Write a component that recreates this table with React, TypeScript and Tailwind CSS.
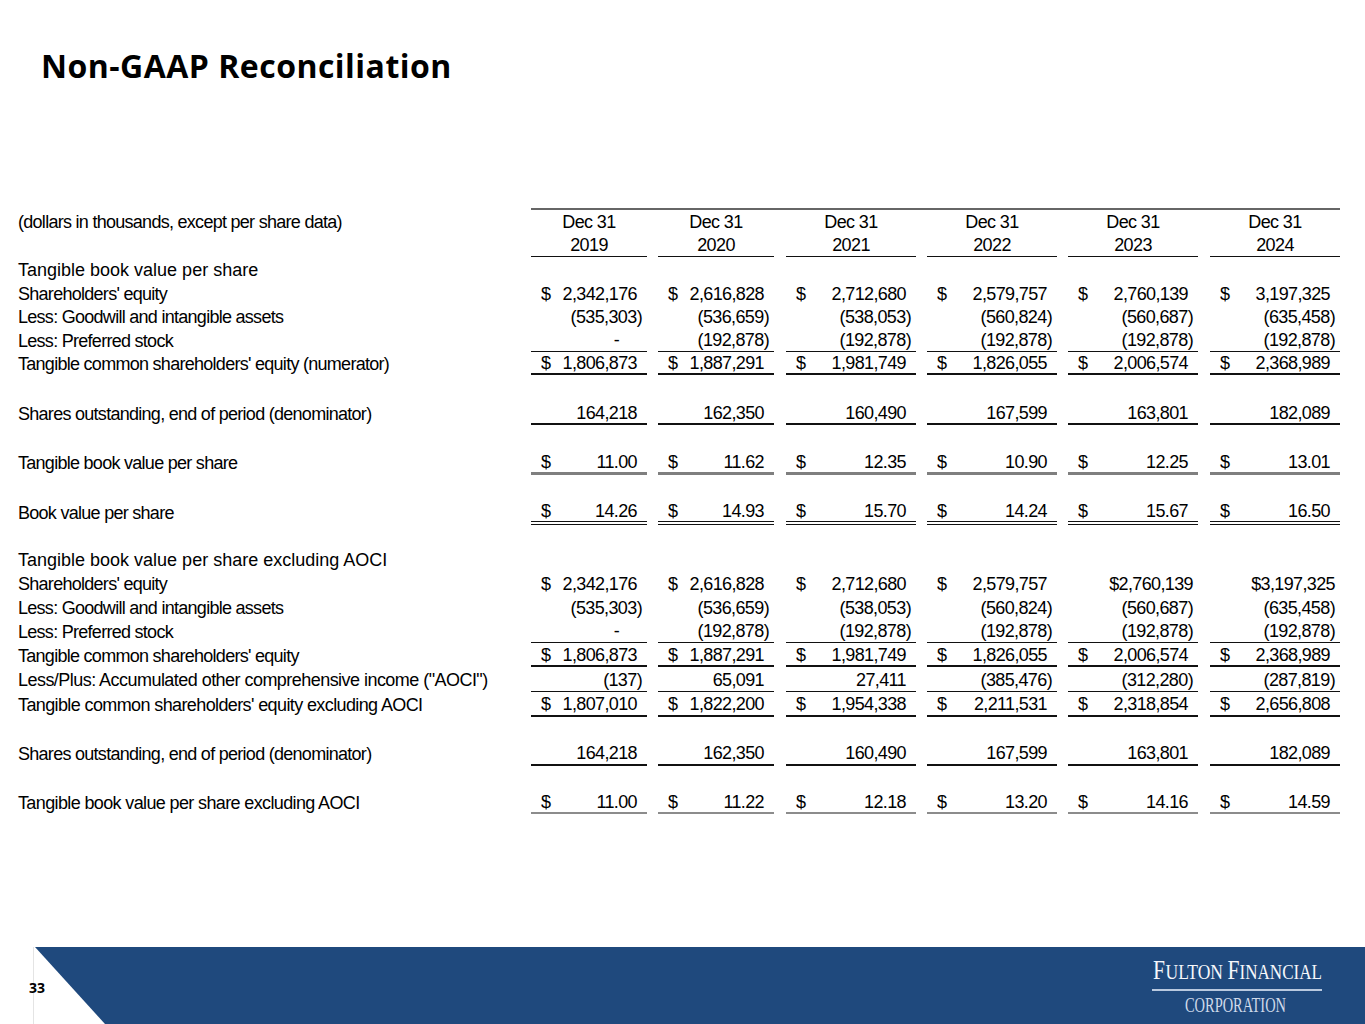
import React from "react";

type Cell = { d?: boolean; v: string; n?: boolean; dash?: boolean };

const COLS = [
  "w-[116px]",
  "ml-[11px] w-[116px]",
  "ml-[12px] w-[130px]",
  "ml-[11px] w-[130px]",
  "ml-[11px] w-[130px]",
  "ml-[12px] w-[130px]",
];

const BORDERS: Record<string, string> = {
  none: "",
  b1: "border-b border-[#111]",
  b2: "border-b-2 border-[#111]",
  g3: "border-b-[3px] border-[#7f7f7f]",
  dbl: "border-b-[4px] border-double border-[#111]",
  g2: "border-b-2 border-[#8c8c8c]",
};

const pos = (vals: string[], dollar = false): Cell[] =>
  vals.map((v) => ({ d: dollar, v }));
const neg = (vals: string[]): Cell[] => vals.map((v) => ({ v, n: true }));

function Row({
  h,
  label,
  labelClass = "tracking-[-0.04em]",
  cells,
  border = "none",
}: {
  h: string;
  label?: string;
  labelClass?: string;
  cells?: Cell[];
  border?: string;
}) {
  return (
    <div className={`flex ${h}`}>
      <div className={`w-[531px] pl-[18px] pt-[1px] flex items-center whitespace-nowrap ${labelClass}`}>
        {label}
      </div>
      {cells &&
        cells.map((c, i) => (
          <div
            key={i}
            className={`${COLS[i]} ${BORDERS[border]} flex items-center justify-between pl-[10px] pr-[5px] pt-[1px] tracking-[-0.035em]`}
          >
            <span>{c.d ? "$" : ""}</span>
            <span className={c.dash ? "pr-[23px]" : c.n ? "" : "pr-[5px]"}>{c.v}</span>
          </div>
        ))}
    </div>
  );
}

function Spacer({ h }: { h: string }) {
  return <div className={h} />;
}

const sh1 = pos(["2,342,176", "2,616,828", "2,712,680", "2,579,757", "2,760,139", "3,197,325"], true);
const sh2: Cell[] = [
  { d: true, v: "2,342,176" },
  { d: true, v: "2,616,828" },
  { d: true, v: "2,712,680" },
  { d: true, v: "2,579,757" },
  { v: "$2,760,139", n: true },
  { v: "$3,197,325", n: true },
];
const gw = neg(["(535,303)", "(536,659)", "(538,053)", "(560,824)", "(560,687)", "(635,458)"]);
const pref: Cell[] = [
  { v: "-", dash: true },
  ...neg(["(192,878)", "(192,878)", "(192,878)", "(192,878)", "(192,878)"]),
];
const tce = pos(["1,806,873", "1,887,291", "1,981,749", "1,826,055", "2,006,574", "2,368,989"], true);
const shares = pos(["164,218", "162,350", "160,490", "167,599", "163,801", "182,089"]);
const tbv = pos(["11.00", "11.62", "12.35", "10.90", "12.25", "13.01"], true);
const bv = pos(["14.26", "14.93", "15.70", "14.24", "15.67", "16.50"], true);
const aoci: Cell[] = [
  { v: "(137)", n: true },
  { v: "65,091" },
  { v: "27,411" },
  { v: "(385,476)", n: true },
  { v: "(312,280)", n: true },
  { v: "(287,819)", n: true },
];
const tceex = pos(["1,807,010", "1,822,200", "1,954,338", "2,211,531", "2,318,854", "2,656,808"], true);
const tbvex = pos(["11.00", "11.22", "12.18", "13.20", "14.16", "14.59"], true);

function HeaderRow({ h, label, texts, border }: { h: string; label?: string; texts: string[]; border?: boolean }) {
  return (
    <div className={`flex ${h}`}>
      <div className="w-[531px] pl-[18px] pt-[1px] flex items-center whitespace-nowrap tracking-[-0.04em]">{label}</div>
      {texts.map((t, i) => (
        <div
          key={i}
          className={`${COLS[i]} ${border ? "border-b border-[#111]" : ""} pt-[1px] flex items-center justify-center tracking-[-0.035em]`}
        >
          {t}
        </div>
      ))}
    </div>
  );
}

const SERIF = "'Liberation Serif', 'Times New Roman', serif";

export default function App() {
  return (
    <div className="w-[1365px] h-[1024px] bg-white text-black flex flex-col overflow-hidden">
      <div className="h-[947px] flex flex-col">
        <div className="h-[208px] pl-[41px] pt-[44px]">
          <div className="font-['Open_Sans',sans-serif] font-bold text-[32px] leading-[normal] tracking-[0.015em] text-black">
            Non-GAAP Reconciliation
          </div>
        </div>
        <div className="font-['Liberation_Sans',Arial,sans-serif] text-[18px] leading-[20px] text-black">
          <div className="ml-[531px] w-[809px] h-[2px] bg-[#666]" />
          <HeaderRow
            h="h-[23px]"
            label="(dollars in thousands, except per share data)"
            texts={["Dec 31", "Dec 31", "Dec 31", "Dec 31", "Dec 31", "Dec 31"]}
          />
          <HeaderRow h="h-[24px]" texts={["2019", "2020", "2021", "2022", "2023", "2024"]} border />
          <Row h="h-[24px]" label="Tangible book value per share" labelClass="tracking-normal" />
          <Row h="h-[24px]" label="Shareholders' equity" cells={sh1} />
          <Row h="h-[23px]" label="Less: Goodwill and intangible assets" cells={gw} />
          <Row h="h-[24px]" label="Less: Preferred stock" cells={pref} border="b1" />
          <Row h="h-[23px]" label="Tangible common shareholders' equity (numerator)" cells={tce} border="b2" />
          <Spacer h="h-[26px]" />
          <Row h="h-[24px]" label="Shares outstanding, end of period (denominator)" cells={shares} border="b2" />
          <Spacer h="h-[25px]" />
          <Row h="h-[25px]" label="Tangible book value per share" cells={tbv} border="g3" />
          <Spacer h="h-[24px]" />
          <Row h="h-[26px]" label="Book value per share" cells={bv} border="dbl" />
          <Spacer h="h-[22px]" />
          <Row
            h="h-[24px]"
            label="Tangible book value per share excluding AOCI"
            labelClass="tracking-normal"
          />
          <Row h="h-[25px]" label="Shareholders' equity" cells={sh2} />
          <Row h="h-[23px]" label="Less: Goodwill and intangible assets" cells={gw} />
          <Row h="h-[24px]" label="Less: Preferred stock" cells={pref} border="b1" />
          <Row h="h-[24px]" label="Tangible common shareholders' equity" cells={tce} border="b2" />
          <Row
            h="h-[25px]"
            label={'Less/Plus: Accumulated other comprehensive income ("AOCI")'}
            labelClass="tracking-[-0.03em]"
            cells={aoci}
            border="b1"
          />
          <Row
            h="h-[25px]"
            label="Tangible common shareholders' equity excluding AOCI"
            labelClass="tracking-[-0.034em]"
            cells={tceex}
            border="b2"
          />
          <Spacer h="h-[24px]" />
          <Row h="h-[25px]" label="Shares outstanding, end of period (denominator)" cells={shares} border="b2" />
          <Spacer h="h-[24px]" />
          <Row
            h="h-[24px]"
            label="Tangible book value per share excluding AOCI"
            labelClass="tracking-[-0.035em]"
            cells={tbvex}
            border="g2"
          />
        </div>
      </div>
      <div className="relative h-[77px] flex">
        <div className="w-[35px] shrink-0" />
        <div className="absolute left-[33px] top-0 h-full w-px bg-[#e4e4e4]" />
        <div className="flex-1 bg-[#1f497d] [clip-path:polygon(0_0,100%_0,100%_100%,70px_100%)] flex justify-end items-start pt-[7px] pr-[40px]">
          <svg width="176" height="64" viewBox="0 0 176 64">
            <text x="4" y="25" fontFamily={SERIF} fontSize="27" fill="#f5f7fb" textLength="12" lengthAdjust="spacingAndGlyphs">
              F
            </text>
            <text x="16.5" y="25" fontFamily={SERIF} fontSize="21" fill="#f5f7fb" textLength="57.5" lengthAdjust="spacingAndGlyphs">
              ULTON
            </text>
            <text x="78.5" y="25" fontFamily={SERIF} fontSize="27" fill="#f5f7fb" textLength="12" lengthAdjust="spacingAndGlyphs">
              F
            </text>
            <text x="90.5" y="25" fontFamily={SERIF} fontSize="21" fill="#f5f7fb" textLength="82.5" lengthAdjust="spacingAndGlyphs">
              INANCIAL
            </text>
            <rect x="3" y="35" width="170" height="2" fill="#b9c9df" />
            <text x="36" y="58" fontFamily={SERIF} fontSize="20" fill="#cfdaea" textLength="101" lengthAdjust="spacingAndGlyphs">
              CORPORATION
            </text>
          </svg>
        </div>
        <div className="absolute left-[29px] top-[31px] font-['Open_Sans',sans-serif] font-bold text-[14px] leading-[19px] text-black">
          33
        </div>
      </div>
    </div>
  );
}
